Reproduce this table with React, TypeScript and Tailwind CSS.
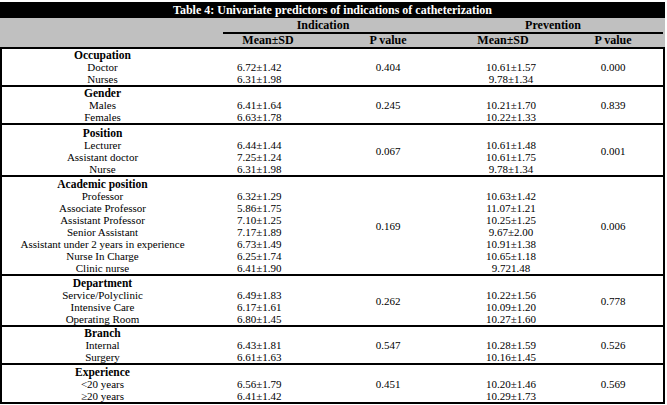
import React from "react";

type Group = {
  title: string;
  rows: [string, string, string][];
  pInd: string;
  pPrev: string;
  pt: string;
};

const groups: Group[] = [
  {
    title: "Occupation",
    rows: [
      ["Doctor", "6.72±1.42", "10.61±1.57"],
      ["Nurses", "6.31±1.98", "9.78±1.34"],
    ],
    pInd: "0.404",
    pPrev: "0.000",
    pt: "pt-0",
  },
  {
    title: "Gender",
    rows: [
      ["Males", "6.41±1.64", "10.21±1.70"],
      ["Females", "6.63±1.78", "10.22±1.33"],
    ],
    pInd: "0.245",
    pPrev: "0.839",
    pt: "pt-0",
  },
  {
    title: "Position",
    rows: [
      ["Lecturer", "6.44±1.44", "10.61±1.48"],
      ["Assistant doctor", "7.25±1.24", "10.61±1.75"],
      ["Nurse", "6.31±1.98", "9.78±1.34"],
    ],
    pInd: "0.067",
    pPrev: "0.001",
    pt: "pt-[2px]",
  },
  {
    title: "Academic position",
    rows: [
      ["Professor", "6.32±1.29", "10.63±1.42"],
      ["Associate Professor", "5.86±1.75", "11.07±1.21"],
      ["Assistant Professor", "7.10±1.25", "10.25±1.25"],
      ["Senior Assistant", "7.17±1.89", "9.67±2.00"],
      ["Assistant under 2 years in experience", "6.73±1.49", "10.91±1.38"],
      ["Nurse In Charge", "6.25±1.74", "10.65±1.18"],
      ["Clinic nurse", "6.41±1.90", "9.721.48"],
    ],
    pInd: "0.169",
    pPrev: "0.006",
    pt: "pt-[1px]",
  },
  {
    title: "Department",
    rows: [
      ["Service/Polyclinic", "6.49±1.83", "10.22±1.56"],
      ["Intensive Care", "6.17±1.61", "10.09±1.20"],
      ["Operating Room", "6.80±1.45", "10.27±1.60"],
    ],
    pInd: "0.262",
    pPrev: "0.778",
    pt: "pt-[1px]",
  },
  {
    title: "Branch",
    rows: [
      ["Internal", "6.43±1.81", "10.28±1.59"],
      ["Surgery", "6.61±1.63", "10.16±1.45"],
    ],
    pInd: "0.547",
    pPrev: "0.526",
    pt: "pt-0",
  },
  {
    title: "Experience",
    rows: [
      ["<20 years", "6.56±1.79", "10.20±1.46"],
      ["≥20 years", "6.41±1.42", "10.29±1.73"],
    ],
    pInd: "0.451",
    pPrev: "0.569",
    pt: "pt-[1px]",
  },
];

export default function App() {
  return (
    <div className="w-[667px] h-[405px] bg-white pt-[2px] font-['Liberation_Serif',serif] text-black">
      <div className="w-[665px]">
        <div className="h-[16px] bg-black text-white text-[12px] font-bold leading-[16px] text-center">
          Table 4: Univariate predictors of indications of catheterization
        </div>
        <div className="bg-[#c0c0c0] h-[29px] text-[12px] font-bold">
          <div className="flex h-[14px] leading-[14px]">
            <div className="w-[203px]" />
            <div className="w-[240px] text-center">Indication</div>
            <div className="w-[220px] text-center">Prevention</div>
          </div>
          <div className="flex">
            <div className="w-[223px]" />
            <div className="w-[440px] h-[2px] bg-black" />
          </div>
          <div className="flex h-[13px] leading-[13px]">
            <div className="w-[203px]" />
            <div className="w-[130px] text-center">Mean±SD</div>
            <div className="w-[110px] text-center">P value</div>
            <div className="w-[120px] text-center">Mean±SD</div>
            <div className="w-[100px] text-center">P value</div>
          </div>
        </div>
        <div className="h-[2px] bg-black" />
        <div className="w-[665px] border-x-2 border-black text-[11px] leading-[12px]">
          {groups.map((g) => (
            <div key={g.title} className={`flex border-b-2 border-black ${g.pt}`}>
              <div className="w-[201px] text-center">
                <div className="h-[12px] font-bold text-[11.5px]">{g.title}</div>
                {g.rows.map((r) => (
                  <div key={r[0]} className="h-[12px] whitespace-nowrap">
                    {r[0]}
                  </div>
                ))}
              </div>
              <div className="w-[130px] pl-[34px]">
                <div className="h-[12px]" />
                {g.rows.map((r) => (
                  <div key={r[0]} className="h-[12px]">
                    {r[1]}
                  </div>
                ))}
              </div>
              <div className="w-[110px] flex items-center justify-center">{g.pInd}</div>
              <div className="w-[120px] pl-[16px] text-center">
                <div className="h-[12px]" />
                {g.rows.map((r) => (
                  <div key={r[0]} className="h-[12px]">
                    {r[2]}
                  </div>
                ))}
              </div>
              <div className="w-[100px] flex items-center justify-center">{g.pPrev}</div>
            </div>
          ))}
        </div>
      </div>
    </div>
  );
}
